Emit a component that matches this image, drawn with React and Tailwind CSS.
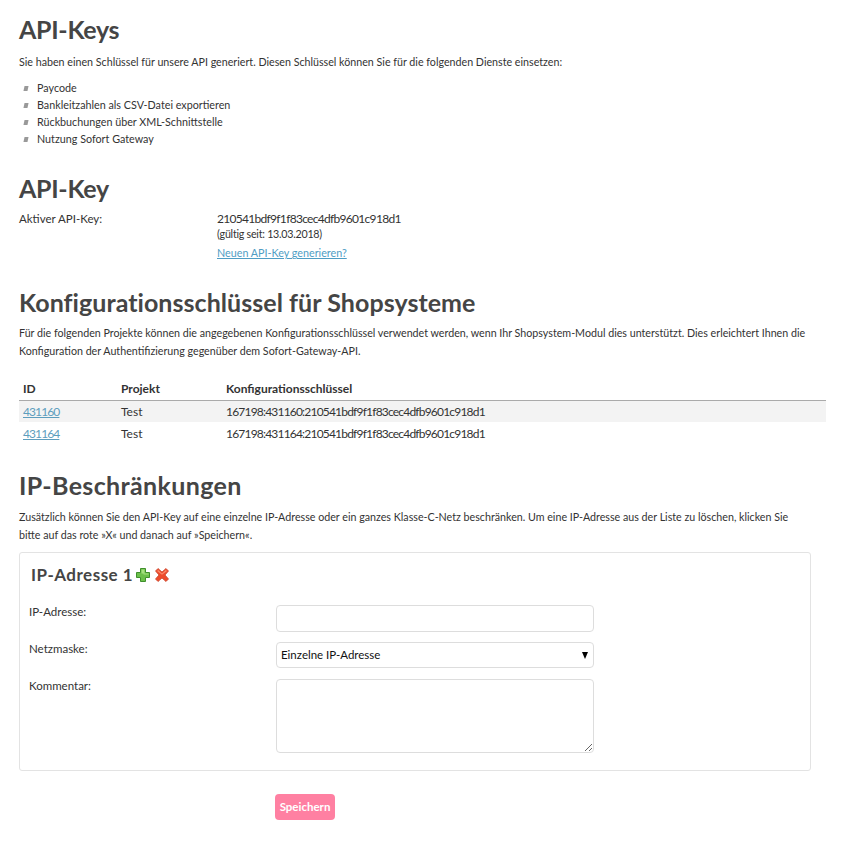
const services = [
  "Paycode",
  "Bankleitzahlen als CSV-Datei exportieren",
  "Rückbuchungen über XML-Schnittstelle",
  "Nutzung Sofort Gateway",
];

const projects = [
  { id: "431160", name: "Test", key: "167198:431160:210541bdf9f1f83cec4dfb9601c918d1" },
  { id: "431164", name: "Test", key: "167198:431164:210541bdf9f1f83cec4dfb9601c918d1" },
];

const headingFont = "font-['Lato',sans-serif] font-bold text-[#454545]";

function PlusIcon() {
  return (
    <svg width="16" height="16" viewBox="0 0 16 16">
      <path d="M5.5 1.5h5v4h4v5h-4v4h-5v-4h-4v-5h4z" fill="#6cc04a" stroke="#3f8f2c" strokeWidth="1" strokeLinejoin="round" />
      <path d="M6.5 2.5h3v4h4v1h-5v-1h-2z" fill="#a5e07f" />
    </svg>
  );
}

function CrossIcon() {
  return (
    <svg width="16" height="16" viewBox="0 0 16 16">
      <path d="M1.5 4 4 1.5 8 5l4-3.5L14.5 4 11 8l3.5 4-2.5 2.5L8 11l-4 3.5L1.5 12 5 8z" fill="#ee4b2b" stroke="#c9482f" strokeWidth="0.8" strokeLinejoin="round" />
      <path d="M3 4 4.2 3 8 6.5 11.8 3 13 4 8 7.8z" fill="#fb8a6b" />
    </svg>
  );
}

export default function App() {
  return (
    <div className="w-[856px] h-[843px] overflow-hidden bg-white pl-[19px] pr-[30px] pt-[16px] font-['Lato',sans-serif] text-[#333] text-[10.75px]">
      {/* API-Keys */}
      <h1 className={`${headingFont} text-[25px] leading-[26px] tracking-[-0.3px]`}>API-Keys</h1>
      <p className="mt-[13px] leading-[14px] text-[10.7px]">
        Sie haben einen Schlüssel für unsere API generiert. Diesen Schlüssel können Sie für die folgenden Dienste einsetzen:
      </p>
      <ul className="mt-[11px]">
        {services.map((s) => (
          <li key={s} className="flex items-center h-[17px]">
            <span className="w-[4px] h-[5px] ml-[5px] mr-[9px] bg-[#999] -skew-x-12" />
            {s}
          </li>
        ))}
      </ul>

      {/* API-Key */}
      <h2 className={`${headingFont} mt-[27px] text-[25px] leading-[26px] tracking-[-0.3px]`}>API-Key</h2>
      <div className="mt-[10px] flex">
        <div className="w-[198px] text-[11.5px] leading-[16px]">Aktiver API-Key:</div>
        <div>
          <div className="text-[12px] leading-[16px] tracking-[-0.7px]">210541bdf9f1f83cec4dfb9601c918d1</div>
          <div className="text-[10.7px] leading-[13px] tracking-[-0.25px]">(gültig seit: 13.03.2018)</div>
          <a href="#" className="block mt-[6px] text-[#4f9dc4] underline text-[10.75px] leading-[14px]">
            Neuen API-Key generieren?
          </a>
        </div>
      </div>

      {/* Shopsysteme */}
      <h2 className={`${headingFont} mt-[29px] text-[25px] leading-[26px] tracking-[0.05px]`}>
        Konfigurationsschlüssel für Shopsysteme
      </h2>
      <p className="mt-[9px] text-[10.7px] leading-[18px]">
        Für die folgenden Projekte können die angegebenen Konfigurationsschlüssel verwendet werden, wenn Ihr
        Shopsystem-Modul dies unterstützt. Dies erleichtert Ihnen die
        <br />
        Konfiguration der Authentifizierung gegenüber dem Sofort-Gateway-API.
      </p>
      <table className="mt-[18px] w-[807px] border-collapse text-[12px]">
        <thead>
          <tr className="border-b border-[#aaa] h-[22px] text-left">
            <th className="w-[102px] pl-[4px] font-bold">ID</th>
            <th className="w-[105px] font-bold">Projekt</th>
            <th className="font-bold">Konfigurationsschlüssel</th>
          </tr>
        </thead>
        <tbody>
          {projects.map((p, i) => (
            <tr key={p.id} className={i === 0 ? "h-[22px] bg-[#f3f3f3]" : "h-[22px]"}>
              <td className="pl-[4px] pt-[2px]">
                <a href="#" className="text-[#5d9dbd] underline tracking-[-0.9px]">{p.id}</a>
              </td>
              <td className="pt-[2px]">{p.name}</td>
              <td className="pt-[2px] tracking-[-0.8px]">{p.key}</td>
            </tr>
          ))}
        </tbody>
      </table>

      {/* IP-Beschränkungen */}
      <h2 className={`${headingFont} mt-[28px] text-[25px] leading-[26px] tracking-[0.35px]`}>IP-Beschränkungen</h2>
      <p className="mt-[10px] text-[10.7px] leading-[18px]">
        Zusätzlich können Sie den API-Key auf eine einzelne IP-Adresse oder ein ganzes Klasse-C-Netz beschränken. Um eine
        IP-Adresse aus der Liste zu löschen, klicken Sie
        <br />
        bitte auf das rote »X« und danach auf »Speichern«.
      </p>

      <div className="mt-[8px] w-[792px] h-[219px] rounded-[3px] border border-[#e3e3e3] pl-[9px] pt-[11px]">
        <div className="flex items-center pl-[2px] h-[22px]">
          <h3 className={`${headingFont} text-[17px] tracking-[0.5px]`}>IP-Adresse 1</h3>
          <span className="ml-[2px] flex h-[16px] w-[16px] items-center justify-center">
            <PlusIcon />
          </span>
          <span className="ml-[3px] flex h-[16px] w-[16px] items-center justify-center">
            <CrossIcon />
          </span>
        </div>

        <div className="mt-[19px] flex">
          <label className="w-[247px] text-[11.5px] leading-[14px]">IP-Adresse:</label>
          <input className="w-[318px] h-[27px] rounded-[4px] border border-[#ddd]" />
        </div>
        <div className="mt-[10px] flex">
          <label className="w-[247px] text-[11.5px] leading-[14px]">Netzmaske:</label>
          <div className="relative">
            <select className="appearance-none w-[318px] h-[26px] rounded-[4px] border border-[#ddd] bg-white pl-[4px] text-[11.5px] text-[#111]">
              <option>Einzelne IP-Adresse</option>
            </select>
            <span className="absolute right-[6px] top-[10px] h-0 w-0 border-x-[3.5px] border-t-[7px] border-x-transparent border-t-black" />
          </div>
        </div>
        <div className="mt-[11px] flex">
          <label className="w-[247px] text-[11.5px] leading-[14px]">Kommentar:</label>
          <textarea className="w-[318px] h-[74px] rounded-[4px] border border-[#ddd]" />
        </div>
      </div>

      <div className="mt-[23px] pl-[256px]">
        <button className="h-[26px] w-[60px] rounded-[4px] bg-[#ff80a2] text-[11.5px] font-bold text-white">Speichern</button>
      </div>
    </div>
  );
}
